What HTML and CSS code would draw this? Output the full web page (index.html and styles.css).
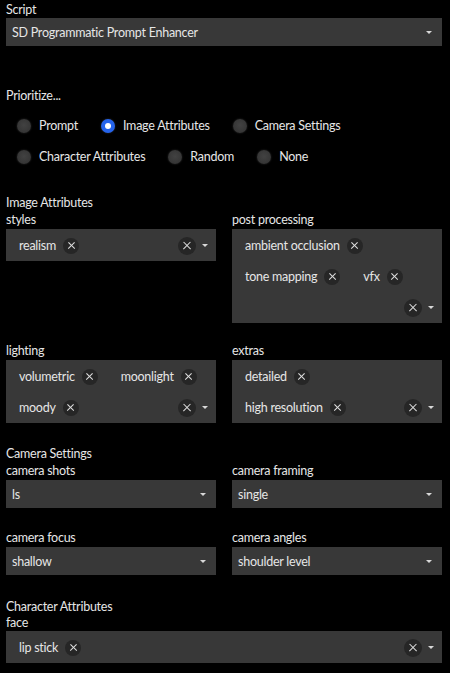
FILE: index.html
```html
<!DOCTYPE html>
<html lang="en">
<head>
    <meta charset="UTF-8">
    <meta name="viewport" content="width=device-width, initial-scale=1.0">
    <title>Script</title>
    <link rel="stylesheet" href="styles.css">
</head>
<body>
    <div class="label">Script</div>
    <div class="select">
        <span>SD Programmatic Prompt Enhancer</span>
        <span class="arrow"></span>
    </div>

    <!-- Prioritize radios -->
    <div class="label prio">Prioritize...</div>
    <div class="radios">
        <div class="radio-row">
            <label class="radio"><span class="dot"></span>Prompt</label>
            <label class="radio"><span class="dot checked"></span>Image Attributes</label>
            <label class="radio"><span class="dot"></span>Camera Settings</label>
        </div>
        <div class="radio-row">
            <label class="radio"><span class="dot"></span>Character Attributes</label>
            <label class="radio"><span class="dot"></span>Random</label>
            <label class="radio"><span class="dot"></span>None</label>
        </div>
    </div>

    <!-- Image Attributes -->
    <div class="label section">Image Attributes</div>
    <div class="grid">
        <div class="field">
            <div class="label">styles</div>
            <div class="multi">
                <div class="line">
                    <span class="chip">realism<span class="x"></span></span>
                    <span class="controls"><span class="x"></span><span class="arrow"></span></span>
                </div>
            </div>
        </div>
        <div class="field">
            <div class="label">post processing</div>
            <div class="multi">
                <div class="line">
                    <span class="chip">ambient occlusion<span class="x"></span></span>
                </div>
                <div class="line">
                    <span class="chip">tone mapping<span class="x"></span></span>
                    <span class="chip">vfx<span class="x"></span></span>
                </div>
                <div class="line">
                    <span class="controls"><span class="x"></span><span class="arrow"></span></span>
                </div>
            </div>
        </div>
        <div class="field">
            <div class="label">lighting</div>
            <div class="multi">
                <div class="line">
                    <span class="chip">volumetric<span class="x"></span></span>
                    <span class="chip">moonlight<span class="x"></span></span>
                </div>
                <div class="line">
                    <span class="chip">moody<span class="x"></span></span>
                    <span class="controls"><span class="x"></span><span class="arrow"></span></span>
                </div>
            </div>
        </div>
        <div class="field">
            <div class="label">extras</div>
            <div class="multi">
                <div class="line">
                    <span class="chip">detailed<span class="x"></span></span>
                </div>
                <div class="line">
                    <span class="chip">high resolution<span class="x"></span></span>
                    <span class="controls"><span class="x"></span><span class="arrow"></span></span>
                </div>
            </div>
        </div>
    </div>

    <!-- Camera Settings -->
    <div class="label section">Camera Settings</div>
    <div class="grid cam">
        <div class="field">
            <div class="label">camera shots</div>
            <div class="select"><span>ls</span><span class="arrow"></span></div>
        </div>
        <div class="field">
            <div class="label">camera framing</div>
            <div class="select"><span>single</span><span class="arrow"></span></div>
        </div>
        <div class="field">
            <div class="label">camera focus</div>
            <div class="select"><span>shallow</span><span class="arrow"></span></div>
        </div>
        <div class="field">
            <div class="label">camera angles</div>
            <div class="select"><span>shoulder level</span><span class="arrow"></span></div>
        </div>
    </div>

    <!-- Character Attributes -->
    <div class="label section last">Character Attributes</div>
    <div class="label">face</div>
    <div class="multi">
        <div class="line">
            <span class="chip">lip stick<span class="x"></span></span>
            <span class="controls"><span class="x"></span><span class="arrow"></span></span>
        </div>
    </div>
</body>
</html>
```

FILE: styles.css
```css
body {
    margin: 0;
    padding: 2px 8px 0 6px;
    background-color: #000;
    color: #e6e6e6;
    font-family: Lato, "Open Sans", sans-serif;
    font-size: 12.5px;
    letter-spacing: -0.25px;
}

.label {
    line-height: 16px;
    height: 16px;
}

.label.prio {
    margin-top: 42px;
}

.label.section {
    margin-top: 23px;
}

.label.section.last {
    margin-top: 24px;
}

.select {
    display: flex;
    align-items: center;
    justify-content: space-between;
    height: 28px;
    padding: 0 10px 0 6px;
    background-color: #383838;
}

.arrow {
    width: 0;
    height: 0;
    border-left: 3.5px solid transparent;
    border-right: 3.5px solid transparent;
    border-top: 3.5px solid #d8d8d8;
}

/* radio group */
.radios {
    padding: 6px 0 0 11px;
}

.radio-row {
    display: flex;
    gap: 23px;
    height: 31px;
    align-items: center;
}

.radio {
    display: flex;
    align-items: center;
    gap: 8px;
}

.dot {
    width: 14px;
    height: 14px;
    border-radius: 50%;
    background: radial-gradient(circle at 50% 45%, #424242, #303030);
    box-shadow: 0 0 2px rgba(80, 80, 80, 0.6);
}

.dot.checked {
    background: #2563eb;
    position: relative;
}

.dot.checked:after {
    content: '';
    position: absolute;
    top: 4px;
    left: 4px;
    width: 6px;
    height: 6px;
    border-radius: 50%;
    background: #fff;
}

/* two column fields */
.grid {
    display: grid;
    grid-template-columns: 210px 210px;
    column-gap: 16px;
    row-gap: 20px;
    align-items: start;
    margin-top: 1px;
}

.grid.cam {
    row-gap: 22px;
}

.field .label {
    margin-bottom: 1px;
}

.multi {
    padding: 1px 8px 0 6px;
    background-color: #383838;
}

.line {
    display: flex;
    align-items: center;
    height: 31px;
    gap: 9px;
}

.chip {
    display: flex;
    align-items: center;
    gap: 7px;
    padding: 0 7px;
}

.x {
    width: 16px;
    height: 16px;
    border-radius: 50%;
    background-color: #262626;
    position: relative;
}

.x:before, .x:after {
    content: '';
    position: absolute;
    top: 7.4px;
    left: 3.5px;
    width: 9px;
    height: 1.3px;
    background: #e0e0e0;
    transform: rotate(45deg);
}

.x:after {
    transform: rotate(-45deg);
}

.controls {
    margin-left: auto;
    display: flex;
    align-items: center;
    gap: 6px;
}

.controls .x {
    width: 18px;
    height: 18px;
}

.controls .x:before, .controls .x:after {
    top: 8.4px;
    left: 4px;
    width: 10px;
}
```
